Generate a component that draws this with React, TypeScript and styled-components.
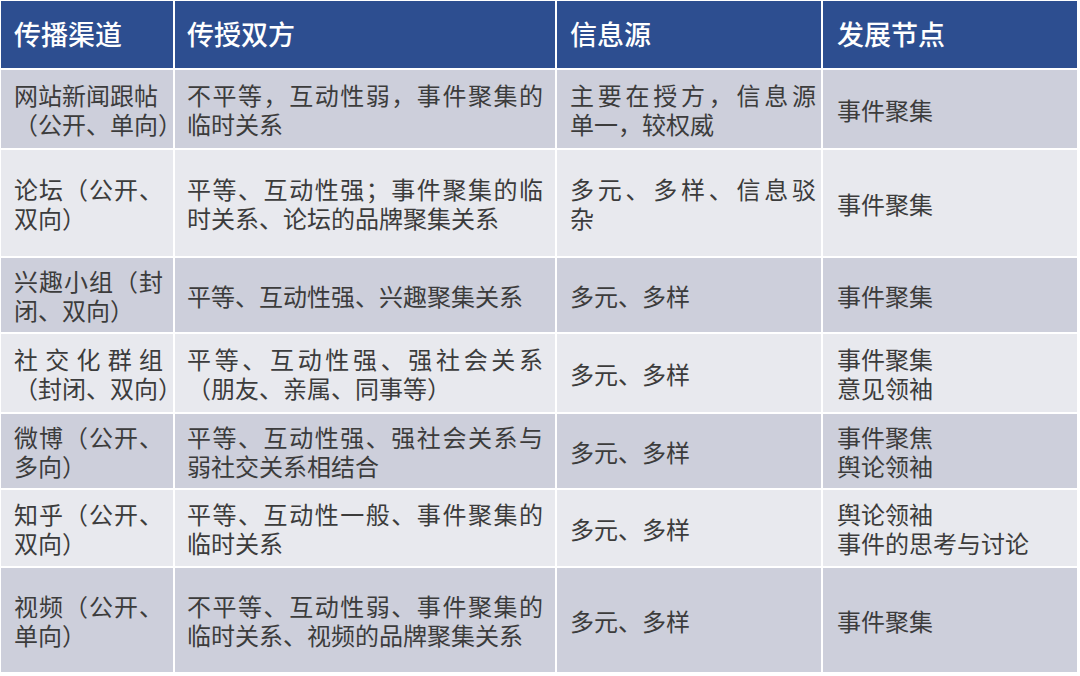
import React from "react";
import styled, { createGlobalStyle } from "styled-components";

const GlobalStyle = createGlobalStyle`
  html, body {
    margin: 0;
    padding: 0;
    background: #ffffff;
  }
  body {
    font-family: "Noto Sans CJK SC", "Noto Sans", sans-serif;
  }
`;

const COLS = "172px 380px 264px 254px";

const Page = styled.div`
  padding: 1px 0 0 1px;
  width: 1080px;
  height: 676px;
  box-sizing: border-box;
  overflow: hidden;
  background: #ffffff;
`;

const Table = styled.div`
  display: flex;
  flex-direction: column;
  gap: 2px;
  width: 1076px;
`;

const Row = styled.div<{ $h: number; $tone: "head" | "dark" | "light" }>`
  display: grid;
  grid-template-columns: ${COLS};
  column-gap: 2px;
  height: ${(p) => p.$h}px;
  & > * {
    background: ${(p) =>
      p.$tone === "head" ? "#2D4E90" : p.$tone === "dark" ? "#CDCFDB" : "#E8E9EE"};
  }
`;

const HeadCell = styled.div<{ $pl: number }>`
  display: flex;
  align-items: center;
  padding-left: ${(p) => p.$pl}px;
  color: #ffffff;
  font-size: 27px;
  font-weight: 500;
  line-height: 32px;
  padding-bottom: 2px;
`;

const Cell = styled.div<{ $pl: number; $pr: number }>`
  display: flex;
  flex-direction: column;
  justify-content: center;
  padding: 0 ${(p) => p.$pr}px 0 ${(p) => p.$pl}px;
  color: #3c3c3c;
  font-size: 24px;
  line-height: 29px;
  min-width: 0;
`;

const Line = styled.span<{ $justify?: boolean }>`
  display: block;
  white-space: nowrap;
  text-align: ${(p) => (p.$justify ? "justify" : "left")};
  text-align-last: ${(p) => (p.$justify ? "justify" : "left")};
`;

type L = [string, boolean?];
type RowData = { h: number; tone: "dark" | "light"; cells: L[][] };

const PAD: [number, number][] = [
  [13, 10],
  [12, 12],
  [13, 5],
  [14, 10],
];

const headers = ["传播渠道", "传授双方", "信息源", "发展节点"];

const rows: RowData[] = [
  {
    h: 78,
    tone: "dark",
    cells: [
      [["网站新闻跟帖"], ["（公开、单向）"]],
      [["不平等，互动性弱，事件聚集的", true], ["临时关系"]],
      [["主要在授方，信息源", true], ["单一，较权威"]],
      [["事件聚集"]],
    ],
  },
  {
    h: 106,
    tone: "light",
    cells: [
      [["论坛（公开、", true], ["双向）"]],
      [["平等、互动性强；事件聚集的临", true], ["时关系、论坛的品牌聚集关系"]],
      [["多元、多样、信息驳", true], ["杂"]],
      [["事件聚集"]],
    ],
  },
  {
    h: 74,
    tone: "dark",
    cells: [
      [["兴趣小组（封", true], ["闭、双向）"]],
      [["平等、互动性强、兴趣聚集关系"]],
      [["多元、多样"]],
      [["事件聚集"]],
    ],
  },
  {
    h: 78,
    tone: "light",
    cells: [
      [["社交化群组", true], ["（封闭、双向）"]],
      [["平等、互动性强、强社会关系", true], ["（朋友、亲属、同事等）"]],
      [["多元、多样"]],
      [["事件聚集"], ["意见领袖"]],
    ],
  },
  {
    h: 74,
    tone: "dark",
    cells: [
      [["微博（公开、", true], ["多向）"]],
      [["平等、互动性强、强社会关系与", true], ["弱社交关系相结合"]],
      [["多元、多样"]],
      [["事件聚焦"], ["舆论领袖"]],
    ],
  },
  {
    h: 76,
    tone: "light",
    cells: [
      [["知乎（公开、", true], ["双向）"]],
      [["平等、互动性一般、事件聚集的", true], ["临时关系"]],
      [["多元、多样"]],
      [["舆论领袖"], ["事件的思考与讨论"]],
    ],
  },
  {
    h: 104,
    tone: "dark",
    cells: [
      [["视频（公开、", true], ["单向）"]],
      [["不平等、互动性弱、事件聚集的", true], ["临时关系、视频的品牌聚集关系"]],
      [["多元、多样"]],
      [["事件聚集"]],
    ],
  },
];

export default function App() {
  return (
    <>
      <GlobalStyle />
      <Page>
        <Table>
          <Row $h={67} $tone="head">
            {headers.map((t, i) => (
              <HeadCell key={t} $pl={PAD[i][0]}>
                {t}
              </HeadCell>
            ))}
          </Row>
          {rows.map((r, ri) => (
            <Row key={ri} $h={r.h} $tone={r.tone}>
              {r.cells.map((lines, ci) => (
                <Cell key={ci} $pl={PAD[ci][0]} $pr={PAD[ci][1]}>
                  {lines.map(([text, j], li) => (
                    <Line key={li} $justify={!!j}>
                      {text}
                    </Line>
                  ))}
                </Cell>
              ))}
            </Row>
          ))}
        </Table>
      </Page>
    </>
  );
}
